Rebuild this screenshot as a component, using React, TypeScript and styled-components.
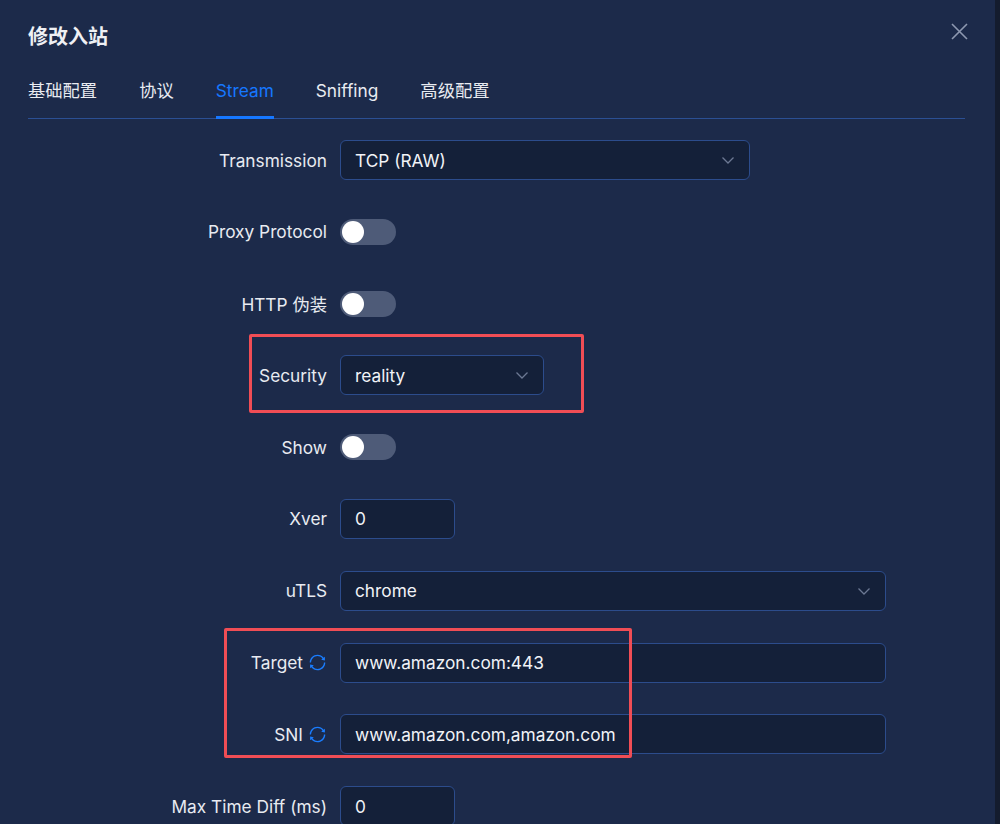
import styled, { createGlobalStyle } from "styled-components";
import { AiOutlineSync } from "react-icons/ai";

const GlobalStyle = createGlobalStyle`
  html, body {
    margin: 0;
    padding: 0;
    background: #141c2e;
  }
  body {
    font-family: Inter, "Noto Sans CJK SC", sans-serif;
    overflow: hidden;
  }
`;

const Modal = styled.div`
  position: relative;
  width: 995px;
  height: 824px;
  background: #1c2a4a;
  color: #e8ebf1;
  overflow: hidden;
`;

const Header = styled.div`
  display: flex;
  justify-content: space-between;
  align-items: center;
  padding: 24px 27px 0 28px;
  height: 26px;
  margin-bottom: 12px;
`;

const Title = styled.div`
  font-size: 20px;
  font-weight: 700;
  line-height: 26px;
  color: #eef0f4;
`;

const CloseBtn = styled.button`
  border: none;
  background: transparent;
  padding: 0;
  display: flex;
  margin-top: -12px;
  cursor: pointer;
`;

const TabNav = styled.div`
  display: flex;
  gap: 42px;
  margin: 0 30px 0 28px;
  border-bottom: 1px solid #2b4f93;
`;

const Tab = styled.div<{ $active?: boolean }>`
  font-size: 17.3px;
  line-height: 22px;
  padding: 18px 0 14px;
  margin-bottom: -1px;
  color: ${(p) => (p.$active ? "#1677ff" : "#e8ebf1")};
  border-bottom: 3px solid ${(p) => (p.$active ? "#1677ff" : "transparent")};
`;

const Form = styled.div`
  display: grid;
  grid-template-columns: 299px 1fr;
  column-gap: 13px;
  row-gap: 31.8px;
  align-items: center;
  padding-left: 28px;
  margin-top: 21px;
`;

const Label = styled.div`
  display: flex;
  justify-content: flex-end;
  align-items: center;
  gap: 5px;
  font-size: 17.3px;
  height: 40px;
  color: #e8ebf1;
  white-space: nowrap;
`;

const Field = styled.div<{ $w: number }>`
  box-sizing: border-box;
  width: ${(p) => p.$w}px;
  height: 40px;
  display: flex;
  align-items: center;
  justify-content: space-between;
  padding: 0 14px;
  background: #142039;
  border: 1px solid #2c4c8c;
  border-radius: 6px;
  font-size: 17.3px;
  color: #f1f3f7;
`;

const Switch = styled.div`
  box-sizing: border-box;
  width: 56px;
  height: 26px;
  border-radius: 13px;
  background: #4e5b78;
  padding: 2px;
  display: flex;
  align-items: center;
`;

const Knob = styled.div`
  width: 22px;
  height: 22px;
  border-radius: 50%;
  background: #ffffff;
`;

const Mark = styled.div<{ $x: number; $y: number; $w: number; $h: number }>`
  position: absolute;
  left: ${(p) => p.$x}px;
  top: ${(p) => p.$y}px;
  width: ${(p) => p.$w}px;
  height: ${(p) => p.$h}px;
  box-sizing: border-box;
  border: 3px solid #f04d55;
  border-radius: 2px;
  pointer-events: none;
`;

const SyncIcon = styled(AiOutlineSync)`
  color: #1a7dff;
  font-size: 19px;
`;

const Chevron = () => (
  <svg width="14" height="14" viewBox="0 0 14 14" fill="none">
    <polyline points="1.5,4.5 7,10 12.5,4.5" stroke="#6c7893" strokeWidth="1.3" />
  </svg>
);

const CloseIcon = () => (
  <svg width="17" height="17" viewBox="0 0 17 17" fill="none">
    <path d="M1 1L16 16M16 1L1 16" stroke="#8d98b0" strokeWidth="1.6" />
  </svg>
);

const tabs = ["基础配置", "协议", "Stream", "Sniffing", "高级配置"];

export default function App() {
  return (
    <>
      <GlobalStyle />
      <Modal>
        <Header>
          <Title>修改入站</Title>
          <CloseBtn>
            <CloseIcon />
          </CloseBtn>
        </Header>
        <TabNav>
          {tabs.map((t) => (
            <Tab key={t} $active={t === "Stream"}>
              {t}
            </Tab>
          ))}
        </TabNav>
        <Form>
          <Label>Transmission</Label>
          <Field $w={410}>
            TCP (RAW)
            <Chevron />
          </Field>

          <Label>Proxy Protocol</Label>
          <Switch>
            <Knob />
          </Switch>

          <Label>HTTP 伪装</Label>
          <Switch>
            <Knob />
          </Switch>

          <Label>Security</Label>
          <Field $w={204}>
            reality
            <Chevron />
          </Field>

          <Label>Show</Label>
          <Switch>
            <Knob />
          </Switch>

          <Label>Xver</Label>
          <Field $w={115}>0</Field>

          <Label>uTLS</Label>
          <Field $w={546}>
            chrome
            <Chevron />
          </Field>

          <Label>
            Target <SyncIcon />
          </Label>
          <Field $w={546}>www.amazon.com:443</Field>

          <Label>
            SNI <SyncIcon />
          </Label>
          <Field $w={546}>www.amazon.com,amazon.com</Field>

          <Label>Max Time Diff (ms)</Label>
          <Field $w={115}>0</Field>
        </Form>
        <Mark $x={249} $y={334} $w={335} $h={79} />
        <Mark $x={224} $y={628} $w={408} $h={130} />
      </Modal>
    </>
  );
}
